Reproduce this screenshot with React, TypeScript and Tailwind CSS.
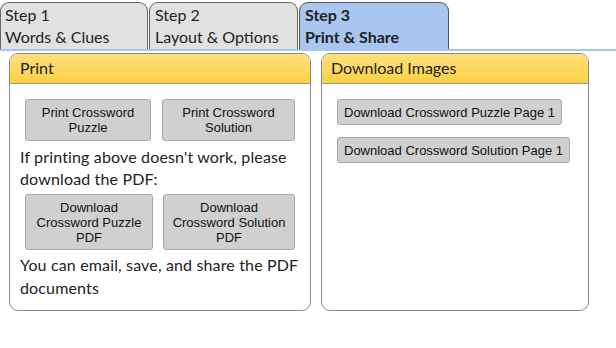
import React from "react";

const btn =
  "bg-[#d0d0d0] border border-[#a8a8a8] rounded-[3px] text-[13px] leading-[15px] text-[#111] flex items-center justify-center text-center font-['Liberation_Sans',Arial,sans-serif]";

export default function App() {
  return (
    <div className="w-[616px] h-[348px] bg-white text-[#222]" style={{ fontFamily: "Lato, 'Noto Sans', sans-serif" }}>
      <div className="flex items-end pt-[2px] border-b-[2px] border-[#a9c6ee] h-[51px]">
        <div className="w-[148px] h-[47px] bg-[#e1e1e1] border border-b-0 border-[#666] rounded-t-[9px] px-[4px] pt-[1px] text-[16px] leading-[22px]">
          <div>Step 1</div>
          <div>Words &amp; Clues</div>
        </div>
        <div className="ml-[1px] w-[149px] h-[47px] bg-[#e1e1e1] border border-b-0 border-[#666] rounded-t-[9px] px-[5px] pt-[1px] text-[16px] leading-[22px]">
          <div>Step 2</div>
          <div>Layout &amp; Options</div>
        </div>
        <div className="ml-[1px] w-[150px] h-[47px] bg-[#a9c6ee] border border-b-0 border-[#555] rounded-t-[9px] px-[5px] pt-[1px] text-[16px] leading-[22px] font-bold">
          <div>Step 3</div>
          <div>Print &amp; Share</div>
        </div>
      </div>
      <div className="flex gap-[10px] pl-[9px] pt-[2px]">
        <div className="w-[302px] h-[258px] border border-[#888] rounded-[9px] overflow-hidden">
          <div className="h-[30px] bg-gradient-to-b from-[#fde07c] to-[#fbd140] border-b border-[#999] px-[10px] text-[16px] leading-[28px]">
            Print
          </div>
          <div className="px-[10px] pt-[15px]">
            <div className="flex gap-[11px] pl-[5px]">
              <div className={`${btn} w-[126px] h-[42px]`}>
                Print Crossword
                <br />
                Puzzle
              </div>
              <div className={`${btn} w-[133px] h-[42px]`}>
                Print Crossword
                <br />
                Solution
              </div>
            </div>
            <div className="text-[16px] leading-[22px] mt-[5px] tracking-[0.15px]">
              If printing above doesn't work, please download the PDF:
            </div>
            <div className="flex gap-[10px] pl-[5px] mt-[4px]">
              <div className={`${btn} w-[128px] h-[56px]`}>
                Download
                <br />
                Crossword Puzzle
                <br />
                PDF
              </div>
              <div className={`${btn} w-[132px] h-[56px]`}>
                Download
                <br />
                Crossword Solution
                <br />
                PDF
              </div>
            </div>
            <div className="text-[16px] leading-[23px] mt-[3px] tracking-[0.15px]">
              You can email, save, and share the PDF documents
            </div>
          </div>
        </div>
        <div className="w-[268px] h-[258px] border border-[#888] rounded-[9px] overflow-hidden">
          <div className="h-[30px] bg-gradient-to-b from-[#fde07c] to-[#fbd140] border-b border-[#999] px-[9px] text-[16px] leading-[28px]">
            Download Images
          </div>
          <div className="pl-[15px] pt-[15px] flex flex-col items-start gap-[12px]">
            <div className={`${btn} h-[26px] px-[6px] whitespace-nowrap`}>Download Crossword Puzzle Page 1</div>
            <div className={`${btn} h-[26px] px-[6px] whitespace-nowrap`}>Download Crossword Solution Page 1</div>
          </div>
        </div>
      </div>
    </div>
  );
}
